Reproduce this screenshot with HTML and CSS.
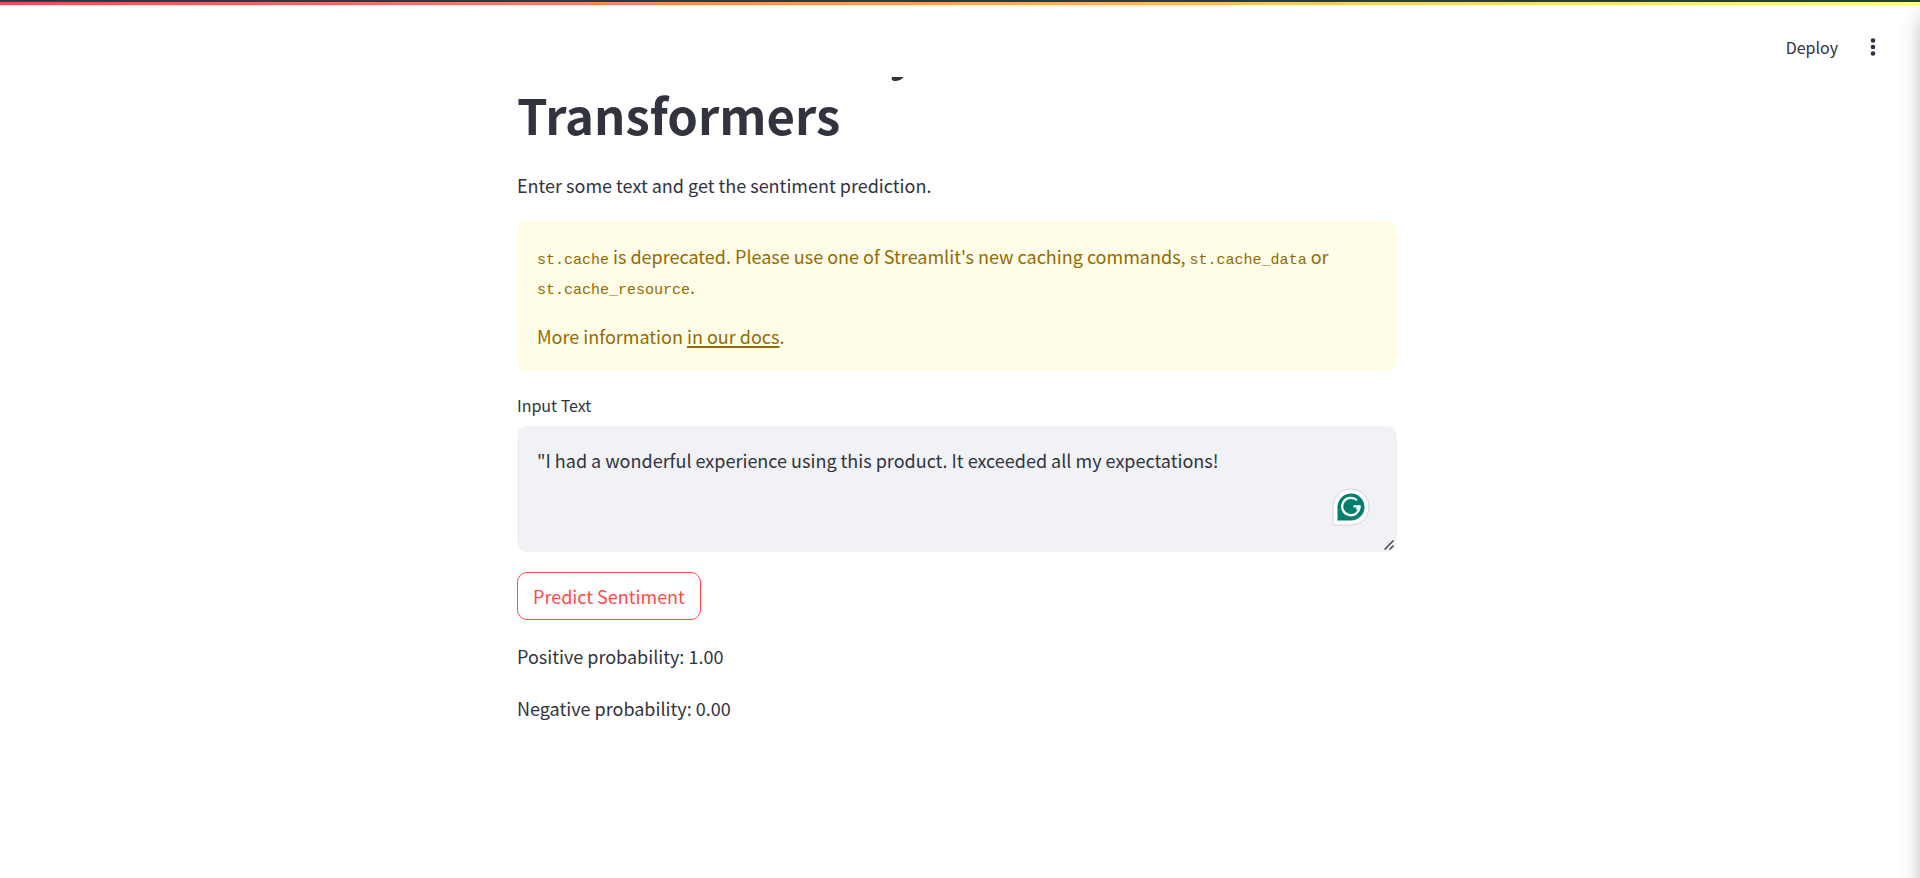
FILE: index.html
```html
<!DOCTYPE html>
<html lang="en">
<head>
<meta charset="utf-8">
<title>Sentiment Analysis</title>
<link rel="stylesheet" href="styles.css">
</head>
<body>
<div class="window-edge"></div>
<div class="decoration"></div>
<header class="toolbar">
  <button class="deploy" type="button">Deploy</button>
  <button class="menu" type="button" aria-label="Main menu">
    <svg width="6" height="18" viewBox="0 0 6 18" fill="#31333f"><circle cx="3" cy="2.5" r="2.3"/><circle cx="3" cy="9" r="2.3"/><circle cx="3" cy="15.5" r="2.3"/></svg>
  </button>
</header>
<main class="main">
  <div class="block">
    <h1 class="title">Sentiment Analysis with<br>Transformers</h1>
    <p class="text">Enter some text and get the sentiment prediction.</p>
    <div class="alert" role="alert">
      <p><code>st.cache</code> is deprecated. Please use one of Streamlit's new caching commands, <code>st.cache_data</code> or <code>st.cache_resource</code>.</p>
      <p>More information <a href="#docs">in our docs</a>.</p>
    </div>
    <div class="field">
      <label class="label" for="input-text">Input Text</label>
      <div class="area">
        <textarea id="input-text" spellcheck="false">"I had a wonderful experience using this product. It exceeded all my expectations!</textarea>
        <svg class="grammarly" width="38" height="38" viewBox="0 0 38 38" fill="none">
          <path d="M1 37V18.500A18 18 0 1 1 19 37Z" fill="#fff" stroke="#d0d3e0"/>
          <path d="M5.500 32.500V18.500A13.500 13.500 0 1 1 19 32.500Z" fill="#027e6f"/>
          <path d="M25 12.300A8.700 8.700 0 1 0 27.600 18.300H21.500" stroke="#fff" stroke-width="2.300"/>
          <path d="M27.500 17.500L24.500 21.500" stroke="#fff" stroke-width="1.500"/>
        </svg>
        <svg class="grip" width="10" height="10" viewBox="0 0 10 10" stroke="#444" stroke-width="1.500"><path d="M0.500 9.500L9.500 0.500M5.500 9.500L9.500 5.500"/></svg>
      </div>
    </div>
    <button class="predict" type="button">Predict Sentiment</button>
    <p class="text">Positive probability: 1.00</p>
    <p class="text">Negative probability: 0.00</p>
  </div>
</main>
<div class="edge-shade"></div>
</body>
</html>
```
FILE: styles.css
```css
* { box-sizing: border-box; }
body {
  margin: 0;
  min-height: 100vh;
  background: #fff;
  color: #31333f;
  font-family: "Noto Sans CJK SC", "Noto Sans", sans-serif;
  font-size: 18px;
  line-height: 32px;
}
h1, p { margin: 0; }
button, textarea { font: inherit; color: inherit; }
.window-edge { height: 2px; background: #263c42; }
.decoration { height: 3px; background: linear-gradient(90deg, #ff4b4b, #fffd80); }
.toolbar {
  height: 72px;
  padding: 12px 44px 0 0;
  display: flex;
  align-items: center;
  justify-content: flex-end;
  gap: 24px;
}
.deploy, .menu { border: 0; background: none; padding: 0; }
.deploy { font-size: 16px; line-height: 24px; }
.menu { display: flex; padding: 8px; margin-right: -8px; }
.main { overflow: hidden; padding-right: 6px; }
.block {
  max-width: 880px;
  margin: 0 auto;
  display: flex;
  flex-direction: column;
  gap: 20px;
}
.title { margin-top: -62px; padding-bottom: 2px; font-size: 49px; line-height: 66px; font-weight: 700; }
.alert {
  padding: 20px;
  border-radius: 10px;
  background: #fffce7;
  color: #926c05;
  line-height: 30px;
  display: flex;
  flex-direction: column;
  gap: 20px;
}
.alert a { color: inherit; text-decoration-thickness: 2px; text-underline-offset: 2px; }
.alert code { font-family: "Liberation Mono", monospace; font-size: 15px; line-height: 20px; }
.field { display: flex; flex-direction: column; gap: 6px; }
.label { margin-top: -1px; font-size: 16px; line-height: 30px; }
.area { position: relative; display: flex; }
.area textarea {
  flex: 1;
  height: 126px;
  padding: 18px 20px;
  border: 0;
  border-radius: 10px;
  background: #f0f2f6;
  resize: none;
  outline: 0;
}
.grammarly { position: absolute; right: 27px; bottom: 26px; }
.grip { position: absolute; right: 3px; bottom: 2px; }
.predict {
  align-self: flex-start;
  padding: 7px 15px;
  border: 1px solid #ff4b4b;
  border-radius: 10px;
  background: #fff;
  color: #ff4b4b;
}
.edge-shade {
  position: fixed;
  top: 5px;
  right: 0;
  bottom: 0;
  width: 20px;
  background: linear-gradient(90deg, rgba(0, 0, 0, 0), rgba(0, 0, 0, 0.03) 50%, rgba(0, 0, 0, 0.12));
  -webkit-mask-image: linear-gradient(rgba(0, 0, 0, 0.2), #000 30px);
  mask-image: linear-gradient(rgba(0, 0, 0, 0.2), #000 30px);
  pointer-events: none;
}
```
